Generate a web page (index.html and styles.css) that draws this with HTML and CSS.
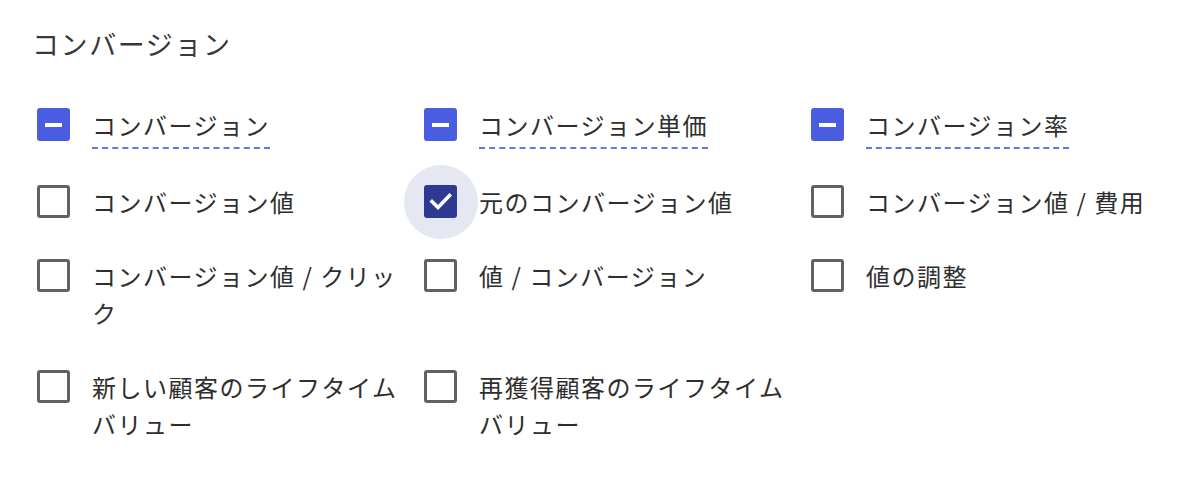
FILE: index.html
```html
<!DOCTYPE html>
<html lang="ja">
<head>
    <meta charset="UTF-8">
    <meta name="viewport" content="width=device-width, initial-scale=1.0">
    <title>コンバージョン</title>
    <link rel="stylesheet" href="styles.css">
</head>
<body>
    <div class="panel">
        <h2 class="panel-title">コンバージョン</h2>

        <div class="metric-grid">
            <!-- 1行目: 一部選択 -->
            <label class="metric metric-key">
                <span class="box box-partial"><span class="bar"></span></span>
                <span class="metric-name dashed">コンバージョン</span>
            </label>
            <label class="metric metric-key">
                <span class="box box-partial"><span class="bar"></span></span>
                <span class="metric-name dashed">コンバージョン単価</span>
            </label>
            <label class="metric metric-key">
                <span class="box box-partial"><span class="bar"></span></span>
                <span class="metric-name dashed">コンバージョン率</span>
            </label>

            <label class="metric">
                <span class="box"></span>
                <span class="metric-name">コンバージョン値</span>
            </label>
            <label class="metric">
                <span class="box box-checked focused">
                    <svg class="tick" width="33" height="33" viewBox="0 0 33 33">
                        <path d="M8 16.5 L14 22.5 L25.5 10.5" fill="none" stroke="#fff" stroke-width="3.6" stroke-linecap="square"/>
                    </svg>
                </span>
                <span class="metric-name">元のコンバージョン値</span>
            </label>
            <label class="metric">
                <span class="box"></span>
                <span class="metric-name">コンバージョン値 / 費用</span>
            </label>

            <label class="metric">
                <span class="box"></span>
                <span class="metric-name">コンバージョン値 / クリック</span>
            </label>
            <label class="metric">
                <span class="box"></span>
                <span class="metric-name">値 / コンバージョン</span>
            </label>
            <label class="metric">
                <span class="box"></span>
                <span class="metric-name">値の調整</span>
            </label>

            <label class="metric">
                <span class="box"></span>
                <span class="metric-name">新しい顧客のライフタイムバリュー</span>
            </label>
            <label class="metric">
                <span class="box"></span>
                <span class="metric-name">再獲得顧客のライフタイムバリュー</span>
            </label>
        </div>
    </div>
</body>
</html>
```

FILE: styles.css
```css
body {
    margin: 0;
    background: #fff;
    color: #333;
    font-family: "Noto Sans CJK JP", "Noto Sans", sans-serif;
}
.panel {
    padding: 24px 0 0 32px;
}
.panel-title {
    margin: 0 0 24px;
    font-size: 27px;
    font-weight: 400;
    line-height: 40px;
    letter-spacing: 1.6px;
    color: #383838;
}
.metric-grid {
    display: grid;
    grid-template-columns: repeat(3, 387px);
    padding-left: 5px;
}
.metric {
    display: flex;
    align-items: flex-start;
    gap: 22px;
    padding: 18px 0 19px;
    isolation: isolate;
}
.metric-key {
    padding-bottom: 22px;
}
.box {
    position: relative;
    flex: none;
    width: 33px;
    height: 33px;
    margin-top: 2px;
    box-sizing: border-box;
    border: 3px solid #5f6166;
    border-radius: 3px;
}
.box-partial {
    border: none;
    background: #4a5de0;
}
.box-partial .bar {
    position: absolute;
    left: 8px;
    top: 14.5px;
    width: 17px;
    height: 4px;
    background: #fff;
}
.box-checked {
    border: none;
    background: #2d3992;
}
.box-checked .tick {
    display: block;
}
.focused::before {
    content: "";
    position: absolute;
    z-index: -1;
    left: -20.5px;
    top: -20.5px;
    width: 74px;
    height: 74px;
    border-radius: 50%;
    background: #e5e7f2;
}
.metric-name {
    max-width: 318px;
    font-size: 24px;
    line-height: 37px;
    letter-spacing: 1.5px;
    color: #2e2e2e;
}
.dashed {
    text-decoration: underline dashed #6677e3;
    text-decoration-thickness: 1.5px;
    text-underline-offset: 12px;
}
```
